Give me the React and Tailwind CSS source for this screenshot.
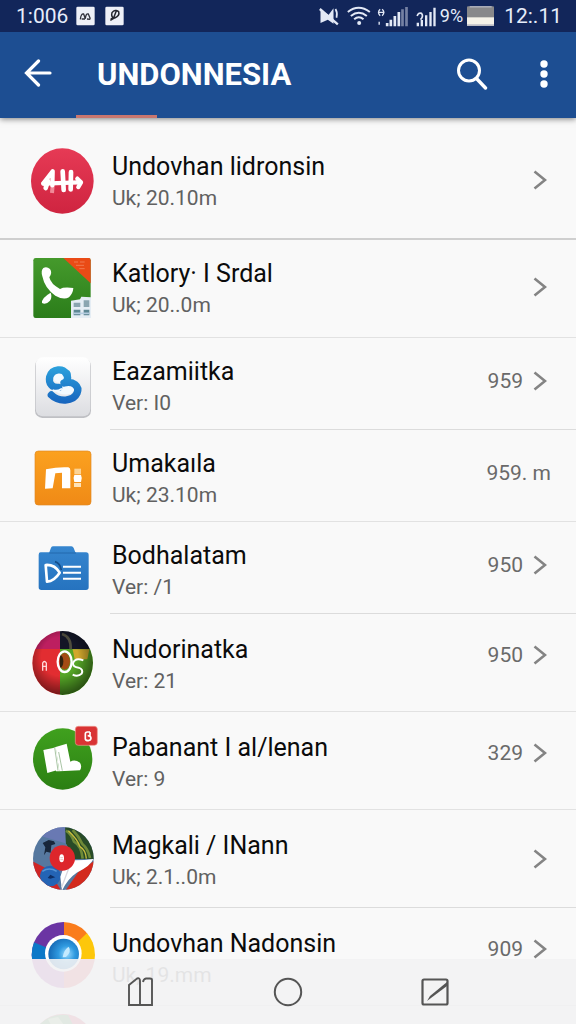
const svgProps = { className: 'h-16 w-16 overflow-visible', 'aria-hidden': true };

function WaveIcon() {
  return (
    <svg {...svgProps} viewBox="90 60 192 192">
      <defs>
        <linearGradient id="wave" x1="0" y1="0" x2="0" y2="1">
          <stop offset="0" stopColor="#e63a55" />
          <stop offset="1" stopColor="#cf2440" />
        </linearGradient>
      </defs>
      <ellipse cx="187" cy="153" rx="94" ry="98" fill="url(#wave)" />
      <path d="M152 166 L164 166 L162 190 L150 188 Z" fill="#f08a98" />
      <g fill="none" stroke="#fff" strokeLinecap="round" strokeLinejoin="round">
        <path d="M130 160 L158 124 L157 166" strokeWidth="13" />
        <path d="M137 174 L144 153" strokeWidth="14" />
        <path d="M130 161 L236 157" strokeWidth="13" />
        <path d="M188 124 L191 180 M213 126 L212 178" strokeWidth="14" />
        <path d="M232 146 L243 157 L235 171" strokeWidth="13" />
      </g>
    </svg>
  );
}

function PhoneIcon() {
  return (
    <svg {...svgProps} viewBox="90 51 192 192">
      <defs>
        <linearGradient id="phone" x1="0" y1="0" x2="0" y2="1">
          <stop offset="0" stopColor="#459a2c" />
          <stop offset="1" stopColor="#2b7d1a" />
        </linearGradient>
      </defs>
      <rect x="100" y="54" width="172" height="180" rx="7" fill="url(#phone)" />
      <path d="M190 54 H266 Q272 54 272 61 V130 Z" fill="#ea4b16" />
      <path d="M222 66 h12 M240 66 h14 M228 76 h24 M238 86 h16" stroke="#f07a50" strokeWidth="3" />
      <path d="M130 84 Q140 78 150 87 Q158 98 148 112 Q152 132 180 147 Q191 140 220 144 Q219 160 207 172 Q190 181 166 167 Q134 145 127 109 Q122 91 130 84 Z" fill="#fff" />
      <path d="M152 158 Q157 171 150 182 Q137 196 126 189 Q124 174 152 158 Z" fill="#fff" />
      <path d="M213 182 L240 178 L244 170 L273 172 V234 H213 Z" fill="#e5edf4" />
      <path d="M221 188 H241 V201 H221 Z M251 181 H268 V201 H251 Z" fill="#8aa5b0" />
      <path d="M221 209 H241 V226 H221 Z M251 209 H268 V226 H251 Z" fill="#5d8794" />
      <path d="M221 220 H268" stroke="#b5cce0" strokeWidth="5" />
    </svg>
  );
}

function SwirlIcon() {
  return (
    <svg {...svgProps} viewBox="90 42 192 192">
      <defs>
        <linearGradient id="tile" x1="0" y1="0" x2="0" y2="1">
          <stop offset="0" stopColor="#ffffff" />
          <stop offset="1" stopColor="#dcdde1" />
        </linearGradient>
        <linearGradient id="swirl" gradientUnits="userSpaceOnUse" x1="0" y1="78" x2="0" y2="190">
          <stop offset="0" stopColor="#2ba0dc" />
          <stop offset="1" stopColor="#1763bd" />
        </linearGradient>
      </defs>
      <rect x="105" y="53" width="168" height="178" rx="22" fill="#bfc0c4" />
      <rect x="107" y="49" width="164" height="177" rx="22" fill="url(#tile)" />
      <ellipse cx="179" cy="109" rx="19" ry="16" fill="#f3faff" />
      <path d="M164 148 Q182 130 204 134 L222 140 Q222 157 205 160 Q178 163 164 148 Z" fill="#f3faff" />
      <path d="M200 101 C192 80 157 82 149 108 C145 128 157 141 176 139" fill="none" stroke="url(#swirl)" strokeWidth="22" strokeLinecap="round" />
      <path d="M201 98 C206 118 198 124 192 126 C220 119 240 135 231 157 C220 182 176 184 154 162" fill="none" stroke="url(#swirl)" strokeWidth="22" strokeLinecap="round" strokeLinejoin="round" />
      <path d="M160 148 Q172 152 184 144" fill="none" stroke="#f3faff" strokeWidth="6" strokeLinecap="round" />
      <circle cx="206" cy="148" r="10" fill="#f3faff" />
    </svg>
  );
}

function OrangeIcon() {
  return (
    <svg {...svgProps} viewBox="90 318 192 192">
      <defs>
        <linearGradient id="orange" x1="0" y1="0" x2="0" y2="1">
          <stop offset="0" stopColor="#fba11f" />
          <stop offset="1" stopColor="#f08a16" />
        </linearGradient>
      </defs>
      <rect x="105" y="330" width="168" height="162" rx="10" fill="url(#orange)" stroke="#e18a22" strokeWidth="2" />
      <path d="M138 385 Q175 377 205 379 Q211 380 211 388 V442 H186 V395 L166 397 L158 442 L135 443 Z" fill="#fff" />
      <path d="M223 383 H243 V400 H223 Z" fill="#fcd394" />
      <path d="M223 402 H243 Q248 412 243 423 H223 Q218 412 223 402 Z" fill="#fff" />
      <path d="M222 426 H243 V438 H222 Z" fill="#fde2b8" />
    </svg>
  );
}

function BadgeIcon() {
  return (
    <svg {...svgProps} viewBox="90 54 192 192">
      <defs>
        <linearGradient id="badge" x1="0" y1="0" x2="0" y2="1">
          <stop offset="0" stopColor="#3686cf" />
          <stop offset="1" stopColor="#2673bf" />
        </linearGradient>
      </defs>
      <path d="M122 94 H148 L153 80 Q155 76 160 76 H214 Q219 76 221 81 L226 94 H258 Q266 94 266 102 V199 Q266 207 258 207 H124 Q116 207 116 199 V101 Q116 94 122 94 Z" fill="url(#badge)" />
      <path d="M148 96 H228" stroke="#2369ad" strokeWidth="3" />
      <path d="M165 122 Q181 127 184 147" fill="none" stroke="#154f8c" strokeWidth="5" />
      <path d="M137 132 L141 182 Q163 180 179 155 Q164 130 137 132 Z" fill="none" stroke="#fff" strokeWidth="8" strokeLinejoin="round" />
      <path d="M189 137 H243 M189 155 H243 M189 173 H243" stroke="#fff" strokeWidth="6" />
    </svg>
  );
}

function QuadIcon() {
  return (
    <svg {...svgProps} viewBox="90 327 192 192">
      <defs>
        <clipPath id="quadClip"><ellipse cx="188" cy="429" rx="91" ry="96" /></clipPath>
        <radialGradient id="quadShade" cx="0.45" cy="0.4" r="0.6">
          <stop offset="0.5" stopColor="#000" stopOpacity="0" />
          <stop offset="1" stopColor="#000" stopOpacity="0.5" />
        </radialGradient>
      </defs>
      <g clipPath="url(#quadClip)">
        <rect x="90" y="327" width="90" height="62" fill="#bd1f60" />
        <rect x="90" y="387" width="90" height="140" fill="#e22d31" />
        <rect x="180" y="327" width="110" height="62" fill="#131626" />
        <rect x="180" y="387" width="110" height="140" fill="#55a526" />
        <path d="M218 388 H268 L262 418 H224 Z" fill="#d1a72c" />
        <path d="M186 342 Q214 350 212 388" fill="none" stroke="#4e4d3d" strokeWidth="8" />
        <ellipse cx="194" cy="424" rx="16" ry="25" fill="#a44b14" />
        <path d="M180 405 V445 Q190 440 190 424 Q190 408 180 405" fill="#33220f" />
        <ellipse cx="188" cy="429" rx="91" ry="96" fill="url(#quadShade)" />
      </g>
      <ellipse cx="194" cy="425" rx="21" ry="31" fill="none" stroke="#fff" strokeWidth="7" />
      <path d="M250 421 Q225 412 219 429 Q218 442 236 443 Q251 448 245 461 Q234 472 218 464" fill="none" stroke="#fff" strokeWidth="6" />
      <path d="M128 452 V429 Q133 420 139 429 V452 M128 439 H139" fill="none" stroke="#ffd9d9" strokeWidth="4" />
    </svg>
  );
}

function BootIcon() {
  return (
    <svg {...svgProps} viewBox="90 51 192 192">
      <defs>
        <linearGradient id="boot" x1="0" y1="0" x2="0" y2="1">
          <stop offset="0" stopColor="#40a11e" />
          <stop offset="1" stopColor="#2b7f13" />
        </linearGradient>
      </defs>
      <ellipse cx="188" cy="147" rx="89" ry="92" fill="url(#boot)" />
      <path d="M130 120 L163 113 L170 181 L142 189 Z M167 111 L200 101 L211 155 Q224 146 240 158 Q247 170 240 181 L178 184 Z" fill="#fff" />
      <path d="M168 111 L178 184 L168 184 L161 113 Z" fill="#fff" />
      <path d="M164 112 L174 182 M176 126 L187 182" stroke="#7fa878" strokeWidth="2" />
      <rect x="226" y="49" width="66" height="57" rx="9" fill="#d93334" stroke="#ee9a8e" strokeWidth="2" />
      <path d="M270 66 H262 Q256 66 256 72 V87 Q257 92 265 92 Q273 91 273 84 Q272 77 263 77 M270 66 V80" fill="none" stroke="#fff" strokeWidth="5" />
    </svg>
  );
}

function MapIcon() {
  return (
    <svg {...svgProps} viewBox="90 345 192 192">
      <defs>
        <clipPath id="mapClip"><ellipse cx="190" cy="446" rx="91" ry="94" /></clipPath>
      </defs>
      <g clipPath="url(#mapClip)">
        <rect x="90" y="345" width="200" height="200" fill="#56789f" />
        <path d="M90 345 H196 V400 L130 380 Z" fill="#6979b3" />
        <path d="M195 345 H290 V447 H222 L198 400 Z" fill="#284b27" />
        <path d="M198 362 Q214 372 222 395 Q244 407 248 446 M218 360 Q236 378 247 402 Q264 416 270 444" fill="none" stroke="#6f8a38" strokeWidth="8" />
        <path d="M205 362 Q232 387 240 410 Q257 420 259 446" fill="none" stroke="#c9bd3e" strokeWidth="4" />
        <path d="M128 399 L146 390 L162 394 L166 402 L154 406 L152 428 L139 425 L132 436 L136 412 Z" fill="#18263a" />
        <path d="M90 450 L144 478 L183 541 H90 Z" fill="#cf2525" />
        <circle cx="151" cy="498" r="31" fill="#2464b5" />
        <path d="M127 484 Q148 470 170 484" fill="none" stroke="#5594d4" strokeWidth="5" />
        <path d="M143 504 L151 494 L166 502 L151 506 Z" fill="#102f65" />
        <path d="M286 450 L235 486 L194 545 H290 Z" fill="#d32a1d" />
        <path d="M198 450 Q245 452 280 447 Q272 468 230 488 Q203 506 186 542 L181 500 Z" fill="#fff" />
        <path d="M210 465 L185 532" stroke="#d8d7df" strokeWidth="4" />
      </g>
      <circle cx="187" cy="444" r="38" fill="#dd262b" />
      <ellipse cx="185" cy="445" rx="7" ry="12" fill="#fff" />
      <path d="M181 443 H189 M181 449 H189" stroke="#e79c9c" strokeWidth="2" />
    </svg>
  );
}

function WheelIcon() {
  return (
    <svg {...svgProps} viewBox="90 69 192 192">
      <defs>
        <clipPath id="wheelClip"><ellipse cx="190" cy="165" rx="95" ry="99" /></clipPath>
        <radialGradient id="lens" cx="0.6" cy="0.5" r="0.6">
          <stop offset="0" stopColor="#9edcff" />
          <stop offset="0.45" stopColor="#2f9ae0" />
          <stop offset="1" stopColor="#1468b4" />
        </radialGradient>
      </defs>
      <g clipPath="url(#wheelClip)">
        <rect x="90" y="60" width="102" height="110" fill="#6b35a3" />
        <path d="M192 165 L90 122 V180 H192 Z" fill="#0c78c8" />
        <path d="M192 165 V60 H290 L262 104 Z" fill="#fa7c1c" />
        <path d="M192 165 L262 98 L290 90 V180 H192 Z" fill="#fdc70b" />
        <rect x="90" y="177" width="102" height="90" fill="#b04cb0" />
        <rect x="192" y="177" width="100" height="90" fill="#e9525c" />
      </g>
      <circle cx="190" cy="160" r="55" fill="#fff" />
      <circle cx="191" cy="162" r="46" fill="url(#lens)" />
      <path d="M188 172 Q192 148 206 140 Q216 154 198 171 Z" fill="#c4eaff" />
    </svg>
  );
}

function LeafIcon() {
  return (
    <svg {...svgProps} viewBox="0 0 64 64">
      <circle cx="33" cy="32" r="31" fill="#dc4a6a" />
      <path d="M10 11 Q22 0 38 2 L43 12 L34 20 H4 Z" fill="#549c50" />
      <path d="M18 6 L28 4 L34 12 L22 14 Z" fill="#a4c98a" />
    </svg>
  );
}

const apps = [
  { name: 'Undovhan lidronsin', detail: 'Uk; 20.10m', Icon: WaveIcon, size: 'first', line: 'strong' },
  { name: 'Katlory· I Srdal', detail: 'Uk; 20..0m', Icon: PhoneIcon, size: 'roomy', line: 'full' },
  { name: 'Eazamiitka', detail: 'Ver: I0', value: '959', Icon: SwirlIcon, size: 'compact', line: 'inset' },
  { name: 'Umakaıla', detail: 'Uk; 23.10m', value: '959. m', noChevron: true, Icon: OrangeIcon, size: 'compact', line: 'full' },
  { name: 'Bodhalatam', detail: 'Ver: /1', value: '950', Icon: BadgeIcon, size: 'compact', line: 'inset' },
  { name: 'Nudorinatka', detail: 'Ver: 21', value: '950', Icon: QuadIcon, size: 'tall', line: 'full' },
  { name: 'Pabanant I al/lenan', detail: 'Ver: 9', value: '329', Icon: BootIcon, size: 'tall', line: 'full' },
  { name: 'Magkali / INann', detail: 'Uk; 2.1..0m', Icon: MapIcon, size: 'tall', line: 'inset' },
  { name: 'Undovhan Nadonsin', detail: 'Uk, 19.mm', value: '909', Icon: WheelIcon, size: 'tall', line: 'full' },
  { name: '', detail: '', Icon: LeafIcon, size: 'last', line: 'full' },
];

const padding = {
  first: 'pt-[33px] pb-[25px]',
  roomy: 'pt-[18px] pb-[17px]',
  compact: 'pt-[18px] pb-[11px]',
  tall: 'pt-5 pb-[15px]',
  last: 'pt-3 pb-20',
};

const divider = {
  strong: 'h-[2px] bg-[#cfcfcf]',
  full: 'h-px bg-[#e2e2e2]',
  inset: 'ml-[110px] h-px bg-[#dcdcdc]',
};

function AppRow({ name, detail, value, noChevron, Icon, size, line }) {
  const raised = size === 'tall' || size === 'last';
  const lift = !value ? 'pb-1' : raised ? 'pb-5' : 'pb-3';
  return (
    <li>
      <a href="#" aria-label={name || 'App'} className={`flex items-center pr-[29px] pl-[30px] ${padding[size]}`}>
        <span className={`-my-2 shrink-0 ${raised ? 'pb-2' : ''}`}><Icon /></span>
        <span className="ml-[18px] min-w-0 flex-1 whitespace-nowrap">
          <span className="block h-8 text-[25px] leading-8 text-[#0b0b0b]">{name}</span>
          <span className="block h-[30px] text-[21px] leading-[30px] text-[#616161]">{detail}</span>
        </span>
        {name && (
          <span className={`flex shrink-0 items-center gap-2.5 ${lift}`}>
            {value && <span className={`text-[21px] leading-6 text-[#6a6a6a] ${noChevron ? '-mr-1' : ''}`}>{value}</span>}
            {!noChevron && (
              <svg viewBox="0 0 14 20" className="h-5 w-3.5" fill="none" stroke="#848484" strokeWidth="2.6" aria-hidden="true">
                <path d="M1.5 1.5 L12 10 L1.5 18.5" />
              </svg>
            )}
          </span>
        )}
      </a>
      <div className={divider[line]} />
    </li>
  );
}

function StatusBar() {
  return (
    <div className="flex h-8 items-center justify-between bg-[#12265a] pr-[14px] pl-4 text-[21px] leading-7 text-[#e6edfa]">
      <div className="flex items-center gap-2">
        <span>1:006</span>
        <svg viewBox="0 0 144 60" className="h-5 w-12" aria-hidden="true">
          <rect x="1" y="2" width="55" height="56" rx="4" fill="#eef0f8" />
          <path d="M13 40 Q15 22 23 24 L28 38 Q29 22 37 24 L43 38 M17 39 H27 M33 39 L43 40" fill="none" stroke="#30313a" strokeWidth="4" />
          <rect x="88" y="2" width="55" height="56" rx="4" fill="#eef0f8" />
          <path d="M104 38 L116 36 Q132 29 128 17 Q117 8 108 20 Q104 34 116 37 M122 12 L113 35 M103 43 L113 37" fill="none" stroke="#24252d" strokeWidth="4.5" />
        </svg>
      </div>
      <div className="flex items-center">
        {/* muted, wifi and both signal meters */}
        <svg viewBox="108 6 350 66" className="h-[22px] w-[117px]" fill="none" stroke="#e3e9f6" aria-hidden="true">
          <path d="M112 20 L136 36 L151 16 V62 L134 50 L112 60 Z" fill="#e3e9f6" stroke="none" />
          <path d="M110 18 L164 64" strokeWidth="7" />
          <path d="M157 18 Q164 30 160 44" strokeWidth="5" />
          <path d="M194 27 Q226 2 260 27 M203 39 Q227 20 251 39 M213 49 Q227 37 241 49" strokeWidth="6" />
          <circle cx="228" cy="60" r="6" fill="#e3e9f6" stroke="none" />
          <path d="M291 19 Q281 28 291 38 M297 19 Q307 28 297 38 M285 28 H304 M288 56 V65" strokeWidth="4" />
          <path d="M312 70 V60 M323 70 V50 M335 70 V39 M347 70 V27" strokeWidth="8" />
          <path d="M358 70 V19 M370 70 V12" stroke="#7581a3" strokeWidth="8" />
          <path d="M402 39 Q405 28 415 31 Q422 39 412 50" strokeWidth="5" />
          <path d="M404 70 V59 M416 70 V51 M429 70 V37 M442 70 V27 M454 70 V14" strokeWidth="7" />
        </svg>
        <span className="ml-1 text-lg">9%</span>
        <svg viewBox="0 0 81 58" className="ml-1 h-5 w-[27px]" aria-hidden="true">
          <rect width="81" height="58" rx="3" fill="#88888a" />
          <rect x="8" y="0" width="66" height="3" fill="#c7cad4" />
          <rect y="33" width="81" height="25" fill="#f5f2e8" />
          <rect y="54" width="81" height="4" fill="#b8bac4" />
        </svg>
        <span className="ml-2.5">12:.11</span>
      </div>
    </div>
  );
}

export default function App() {
  return (
    <div className="flex h-screen flex-col overflow-hidden bg-[#f9f9f9] font-['Roboto',sans-serif]">
      <header className="relative z-10 shrink-0 shadow-[0_1px_6px_rgba(0,0,0,0.5)]">
        <StatusBar />
        <div className="flex h-[86px] items-center bg-[#1d4e92] px-6 text-white">
          <button aria-label="Back" className="flex w-8 justify-start pb-1">
            <svg viewBox="0 0 28 28" className="h-7 w-7 shrink-0" fill="none" stroke="currentColor" strokeWidth="3.2" strokeLinecap="round" aria-hidden="true">
              <path d="M14.5 2 L2.5 14 L14.5 26 M2.5 14 H26" />
            </svg>
          </button>
          <h1 className="ml-[41px] flex-1 text-[31px] leading-10 font-bold">UNDONNESIA</h1>
          <button aria-label="Search" className="pb-0.5">
            <svg viewBox="0 0 32 32" className="h-8 w-8" fill="none" stroke="currentColor" strokeWidth="3" strokeLinecap="round" aria-hidden="true">
              <circle cx="13" cy="12.5" r="10.5" />
              <path d="M20.5 20.5 L29.5 30" strokeWidth="3.4" />
            </svg>
          </button>
          <button aria-label="More options" className="ml-12 pb-0.5">
            <svg viewBox="0 0 16 28" className="h-7 w-4" fill="currentColor" aria-hidden="true">
              <circle cx="8" cy="4" r="3.7" />
              <circle cx="8" cy="14" r="3.7" />
              <circle cx="8" cy="24" r="3.7" />
            </svg>
          </button>
        </div>
        <div className="absolute bottom-0 left-[76px] h-[3px] w-[81px] bg-[#c9776f]" />
      </header>

      <main className="min-h-0 flex-1 overflow-y-auto [scrollbar-width:none]">
        <ul>
          {apps.map((app, i) => <AppRow key={i} {...app} />)}
        </ul>
      </main>

      <nav className="fixed inset-x-0 bottom-0 flex h-[65px] items-center justify-center gap-[118px] bg-[#f2f2f3]/90 text-[#555]">
        <button aria-label="Recent">
          <svg viewBox="0 0 28 30" className="h-[30px] w-7" fill="none" stroke="currentColor" strokeWidth="1.9" aria-hidden="true">
            <path d="M2 8 L10 1.5 Q13 0.5 13 4 V28 H2 Z M13 28 H25 V3 Q25 1.5 23 1.5 H19 Q16.5 2 16 5" />
          </svg>
        </button>
        <button aria-label="Home">
          <svg viewBox="0 0 30 30" className="h-[30px] w-[30px]" fill="none" stroke="currentColor" strokeWidth="2" aria-hidden="true">
            <circle cx="15" cy="15" r="13.2" />
          </svg>
        </button>
        <button aria-label="Edit">
          <svg viewBox="0 0 28 28" className="h-7 w-7" fill="none" stroke="currentColor" strokeWidth="2.2" aria-hidden="true">
            <rect x="1.5" y="1.5" width="25" height="25" rx="1.5" />
            <path d="M6 23 L9 18 L26 4 L26 8 Z" fill="currentColor" stroke="none" />
          </svg>
        </button>
      </nav>
    </div>
  );
}
